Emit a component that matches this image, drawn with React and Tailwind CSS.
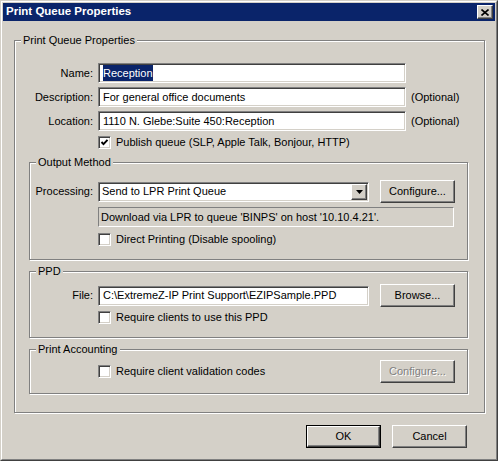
import React from "react";

const raised =
	"border border-t-white border-l-white border-r-[#404040] border-b-[#404040] shadow-[inset_-1px_-1px_0_#808080] bg-[#d4d0c8]";
const sunken =
	"border border-t-[#808080] border-l-[#808080] border-r-white border-b-white shadow-[inset_1px_1px_0_#404040,inset_-1px_-1px_0_#d4d0c8]";

function Group({ label, className, children }) {
	return (
		<div
			className={`relative border border-[#808080] shadow-[inset_1px_1px_0_#fff,1px_1px_0_#fff] ${className}`}
		>
			<span className="absolute left-[6px] top-[-8px] bg-[#d4d0c8] px-[2px] leading-[14px]">
				{label}
			</span>
			{children}
		</div>
	);
}

function Button({ children, disabled, isDefault, className = "" }) {
	const inner = (
		<div
			className={`flex h-full w-full items-center justify-center ${raised} ${
				disabled ? "text-[#808080] [text-shadow:1px_1px_0_#fff]" : ""
			}`}
		>
			{children}
		</div>
	);
	if (isDefault) {
		return (
			<div className={`h-[23px] w-[75px] border border-black ${className}`}>
				{inner}
			</div>
		);
	}
	return <div className={`h-[23px] w-[75px] ${className}`}>{inner}</div>;
}

function Checkbox({ checked, label }) {
	return (
		<div className="flex h-[13px] items-center">
			<div className={`relative h-[13px] w-[13px] shrink-0 bg-white ${sunken}`}>
				{checked && (
					<svg
						viewBox="0 0 13 13"
						width="13"
						height="13"
						className="absolute left-[-1px] top-[-1px]"
					>
						<polyline
							points="3.5,6 5.5,8.2 9.5,3.8"
							fill="none"
							stroke="#000"
							strokeWidth="1.9"
						/>
					</svg>
				)}
			</div>
			<span className="ml-[5px] whitespace-nowrap leading-[13px]">{label}</span>
		</div>
	);
}

function TextBox({ className, children }) {
	return (
		<div
			className={`flex h-[20px] items-center bg-white pl-[4px] whitespace-nowrap ${sunken} ${className}`}
		>
			{children}
		</div>
	);
}

export default function App() {
	return (
		<div className="h-[461px] w-[498px] bg-[#d4d0c8] font-['Liberation_Sans',Arial,sans-serif] text-[11px] text-black">
			<div className="h-full w-full border border-t-[#d4d0c8] border-l-[#d4d0c8] border-r-[#404040] border-b-[#404040]">
				<div className="h-full w-full border border-t-white border-l-white border-r-[#808080] border-b-[#808080] p-[1px]">
					{/* title bar */}
					<div className="flex h-[18px] items-center justify-between bg-[#0a246a] pl-[3px] pr-[2px]">
						<span className="text-[11.5px] font-bold text-white">
							Print Queue Properties
						</span>
						<div className={`flex h-[14px] w-[16px] items-center justify-center ${raised}`}>
							<svg viewBox="0 0 8 7" width="8" height="7">
								<path d="M0.5 0.5 L7.5 6.5 M7.5 0.5 L0.5 6.5" stroke="#000" strokeWidth="1.6" />
							</svg>
						</div>
					</div>

					{/* main group */}
					<Group label="Print Queue Properties" className="ml-[11px] mt-[19px] h-[373px] w-[471px]">
						<div className="flex flex-col gap-[4px] pt-[22px]">
							<div className="flex h-[20px] items-center">
								<span className="mr-[5px] w-[78px] text-right">Name:</span>
								<TextBox className="w-[308px]">
									<span className="bg-[#0a246a] text-white">Reception</span>
								</TextBox>
							</div>
							<div className="flex h-[20px] items-center">
								<span className="mr-[5px] w-[78px] text-right">Description:</span>
								<TextBox className="w-[308px]">For general office documents</TextBox>
								<span className="ml-[5px]">(Optional)</span>
							</div>
							<div className="flex h-[20px] items-center">
								<span className="mr-[5px] w-[78px] text-right">Location:</span>
								<TextBox className="w-[308px]">1110 N. Glebe:Suite 450:Reception</TextBox>
								<span className="ml-[5px]">(Optional)</span>
							</div>
						</div>
						<div className="ml-[83px] mt-[5px]">
							<Checkbox checked label="Publish queue (SLP, Apple Talk, Bonjour, HTTP)" />
						</div>

						{/* output method */}
						<Group label="Output Method" className="ml-[14px] mt-[13px] h-[98px] w-[439px]">
							<div className="mt-[17px] flex h-[23px] items-center">
								<span className="mr-[5px] w-[63px] text-right">Processing:</span>
								<div className={`flex h-[20px] w-[271px] items-center justify-between bg-white pl-[3px] pr-[1px] ${sunken}`}>
									<span>Send to LPR Print Queue</span>
									<div className={`flex h-[16px] w-[16px] items-center justify-center ${raised}`}>
										<svg viewBox="0 0 7 4" width="7" height="4">
											<path d="M0 0 H7 L3.5 4 Z" fill="#000" />
										</svg>
									</div>
								</div>
								<Button className="ml-[11px]">Configure...</Button>
							</div>
							<div className="ml-[68px] mt-[4px] flex h-[20px] w-[356px] items-center border border-t-[#808080] border-l-[#808080] border-r-white border-b-white pl-[2px] whitespace-nowrap">
								Download via LPR to queue 'BINPS' on host '10.10.4.21'.
							</div>
							<div className="ml-[68px] mt-[6px]">
								<Checkbox label="Direct Printing (Disable spooling)" />
							</div>
						</Group>

						{/* PPD */}
						<Group label="PPD" className="ml-[14px] mt-[11px] h-[67px] w-[439px]">
							<div className="mt-[12px] flex h-[23px] items-center">
								<span className="mr-[5px] w-[63px] text-right">File:</span>
								<TextBox className="w-[271px]">C:\ExtremeZ-IP Print Support\EZIPSample.PPD</TextBox>
								<Button className="ml-[11px]">Browse...</Button>
							</div>
							<div className="ml-[68px] mt-[4px]">
								<Checkbox label="Require clients to use this PPD" />
							</div>
						</Group>

						{/* accounting */}
						<Group label="Print Accounting" className="ml-[14px] mt-[11px] h-[45px] w-[439px]">
							<div className="ml-[68px] mt-[10px] flex h-[23px] items-center">
								<div className="w-[282px]">
									<Checkbox label="Require client validation codes" />
								</div>
								<Button disabled>Configure...</Button>
							</div>
						</Group>
					</Group>

					{/* dialog buttons */}
					<div className="mt-[12px] flex justify-end gap-[11px] pr-[28px]">
						<Button isDefault>OK</Button>
						<Button>Cancel</Button>
					</div>
				</div>
			</div>
		</div>
	);
}
